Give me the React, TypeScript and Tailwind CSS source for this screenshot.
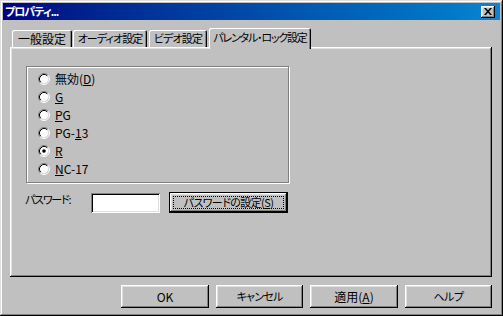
import React from "react";

const raised =
  "shadow-[inset_-1px_-1px_#000,inset_1px_1px_#fff,inset_-2px_-2px_#808080,inset_2px_2px_#dfdfdf]";
const sunken =
  "shadow-[inset_1px_1px_#808080,inset_-1px_-1px_#fff,inset_2px_2px_#000,inset_-2px_-2px_#dfdfdf]";

function Radio({ checked }: { checked?: boolean }) {
  return (
    <svg width="12" height="12" viewBox="0 0 12 12" className="shrink-0">
      <circle cx="6" cy="6" r="4.2" fill="#fff" />
      <path d="M2.11 9.89 A5.5 5.5 0 0 1 9.89 2.11" fill="none" stroke="#808080" strokeWidth="1" />
      <path d="M9.89 2.11 A5.5 5.5 0 0 1 2.11 9.89" fill="none" stroke="#fff" strokeWidth="1" />
      <path d="M2.82 9.18 A4.5 4.5 0 0 1 9.18 2.82" fill="none" stroke="#000" strokeWidth="1" />
      <path d="M9.18 2.82 A4.5 4.5 0 0 1 2.82 9.18" fill="none" stroke="#dfdfdf" strokeWidth="1" />
      {checked && <circle cx="6" cy="6" r="1.8" fill="#000" />}
    </svg>
  );
}

function U({ children }: { children: React.ReactNode }) {
  return <span className="underline underline-offset-[1px] decoration-1">{children}</span>;
}

function Tab({ label, w, ml, cls }: { label: string; w: string; ml: string; cls: string }) {
  return (
    <div
      className={`${w} ${ml} h-[17px] flex items-center justify-center rounded-t-[2px] shadow-[inset_1px_1px_#fff,inset_-1px_0_#000,inset_-2px_0_#808080] leading-none whitespace-nowrap ${cls}`}
    >
      {label}
    </div>
  );
}

function Btn({ children, w, cls = "" }: { children: React.ReactNode; w: string; cls?: string }) {
  return (
    <div className={`${w} h-[23px] flex items-center justify-center bg-[#c0c0c0] ${raised} leading-none whitespace-nowrap ${cls}`}>
      {children}
    </div>
  );
}

export default function App() {
  const rows: { label: React.ReactNode; checked?: boolean }[] = [
    { label: <>無効(<U>D</U>)</> },
    { label: <U>G</U> },
    { label: <><U>P</U>G</> },
    { label: <>PG-<U>1</U>3</> },
    { label: <U>R</U>, checked: true },
    { label: <><U>N</U>C-17</> },
  ];
  return (
    <div
      className={`w-[503px] h-[316px] bg-[#c0c0c0] p-[3px] flex flex-col text-black text-[12px] font-['Noto_Sans_CJK_JP','Noto_Sans',sans-serif] [font-feature-settings:'palt'] shadow-[inset_-1px_-1px_#000,inset_1px_1px_#dfdfdf,inset_-2px_-2px_#808080,inset_2px_2px_#fff]`}
    >
      {/* Title bar */}
      <div className="h-[17px] flex items-center justify-between bg-linear-to-r from-[#000080] to-[#1084d0] pl-[2px] pr-[5px]">
        <span className="text-white font-bold text-[11px] tracking-[-1px] leading-none whitespace-nowrap">プロパティ...</span>
        <div className={`w-[14px] h-[12px] bg-[#c0c0c0] ${raised} flex items-center justify-center`}>
          <svg width="8" height="7" viewBox="0 0 8 7">
            <path d="M0 0h2l2 2.5L6 0h2L5 3.5 8 7H6L4 4.5 2 7H0l3-3.5z" fill="#000" />
          </svg>
        </div>
      </div>

      <div className="ml-[7px] mr-[8px] mt-[8px] flex flex-col">
        {/* Tabs */}
        <div className="h-[19px] flex items-end pl-[2px]">
          <Tab label="一般設定" w="w-[60px]" ml="ml-0" cls="text-[12px]" />
          <Tab label="オーディオ設定" w="w-[74px]" ml="ml-[1px]" cls="text-[11px] tracking-[-0.9px]" />
          <Tab label="ビデオ設定" w="w-[58px]" ml="ml-[2px]" cls="text-[11px] tracking-[-0.8px]" />
          <div className="relative z-10 ml-[2px] w-[102px] h-[21px] -mb-[2px] bg-[#c0c0c0] rounded-t-[2px] flex justify-center pt-[4px] leading-none whitespace-nowrap text-[11px] tracking-[-1.2px] shadow-[inset_1px_1px_#fff,inset_-1px_0_#000,inset_-2px_0_#808080]">
            パレンタル・ロック設定
          </div>
        </div>

        {/* Panel */}
        <div className={`h-[230px] ${raised} pl-[15px] pt-[19px] flex flex-col`}>
          <div className="ml-[1px] w-[263px] h-[117px] border border-[#808080] shadow-[inset_1px_1px_#fff,1px_1px_#fff] pt-[3px] pl-[11px] flex flex-col">
            {rows.map((r, i) => (
              <div key={i} className="h-[18px] flex items-center gap-[5px] leading-none">
                <Radio checked={r.checked} />
                <span>{r.label}</span>
              </div>
            ))}
          </div>

          <div className="mt-[9px] flex items-start">
            <div className="w-[66px] leading-[12px] pt-[1px] whitespace-nowrap text-[11px] tracking-[-1.2px]">パスワード:</div>
            <div className={`mt-[1px] w-[69px] h-[20px] bg-white ${sunken}`} />
            <div className="ml-[9px] w-[119px] h-[21px] border border-black bg-[#c0c0c0]">
              <div className={`w-full h-full ${raised} p-[3px]`}>
                <div className="w-full h-full border border-dotted border-black flex items-center justify-center leading-none whitespace-nowrap text-[11px] tracking-[-0.6px]">
                  パスワードの設定(<U>S</U>)
                </div>
              </div>
            </div>
          </div>
        </div>

        {/* Buttons */}
        <div className="mt-[8px] flex justify-end gap-[7px]">
          <Btn w="w-[88px]">OK</Btn>
          <Btn w="w-[87px]" cls="text-[11px] tracking-[-0.8px]">キャンセル</Btn>
          <Btn w="w-[88px]">適用(<U>A</U>)</Btn>
          <Btn w="w-[87px]" cls="text-[11px] tracking-[-0.5px]">ヘルプ</Btn>
        </div>
      </div>
    </div>
  );
}
